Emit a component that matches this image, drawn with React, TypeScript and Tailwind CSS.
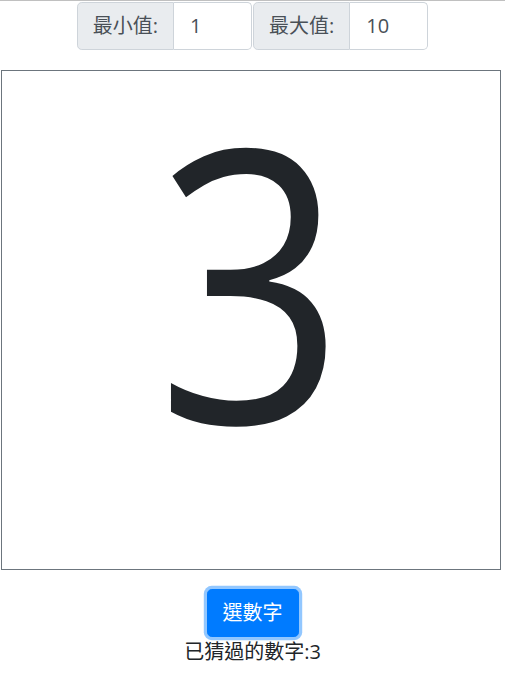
import React from "react";

const font = '"Open Sans", "Noto Sans CJK TC", sans-serif';

export default function App() {
  return (
    <div
      className="border-t border-[#c0c0c0] bg-white text-[#212529]"
      style={{ fontFamily: font }}
    >
      {/* range inputs */}
      <div className="mt-px flex justify-center gap-px">
        <div className="flex">
          <span className="rounded-l-[4.8px] border border-[#ced4da] bg-[#e9ecef] px-[15px] py-2 text-[20px] leading-[30px] text-[#495057]">
            最小值:
          </span>
          <input
            defaultValue="1"
            className="w-[78px] rounded-r-[4.8px] border border-l-0 border-[#ced4da] bg-white px-4 py-2 text-[20px] leading-[30px] text-[#495057] outline-none"
          />
        </div>
        <div className="flex">
          <span className="rounded-l-[4.8px] border border-[#ced4da] bg-[#e9ecef] px-[15px] py-2 text-[20px] leading-[30px] text-[#495057]">
            最大值:
          </span>
          <input
            defaultValue="10"
            className="w-[78px] rounded-r-[4.8px] border border-l-0 border-[#ced4da] bg-white px-4 py-2 text-[20px] leading-[30px] text-[#495057] outline-none"
          />
        </div>
      </div>

      {/* number display */}
      <div className="ml-px mt-[20px] h-[500px] w-[500px] border border-[#6c757d] pt-[15px] text-center text-[380px] leading-none text-[#212529]">
        <span className="inline-block scale-x-[0.87]">3</span>
      </div>

      {/* action */}
      <div className="mt-[19px] flex flex-col items-center">
        <button
          type="button"
          className="rounded-[4.8px] border border-[#007bff] bg-[#007bff] px-[15px] py-2 text-[20px] leading-[30px] text-white shadow-[0_0_0_3.2px_rgba(38,143,255,0.5)]"
        >
          選數字
        </button>
        <div className="text-[20px] leading-[30px] text-[#212529]">已猜過的數字:3</div>
      </div>
    </div>
  );
}
